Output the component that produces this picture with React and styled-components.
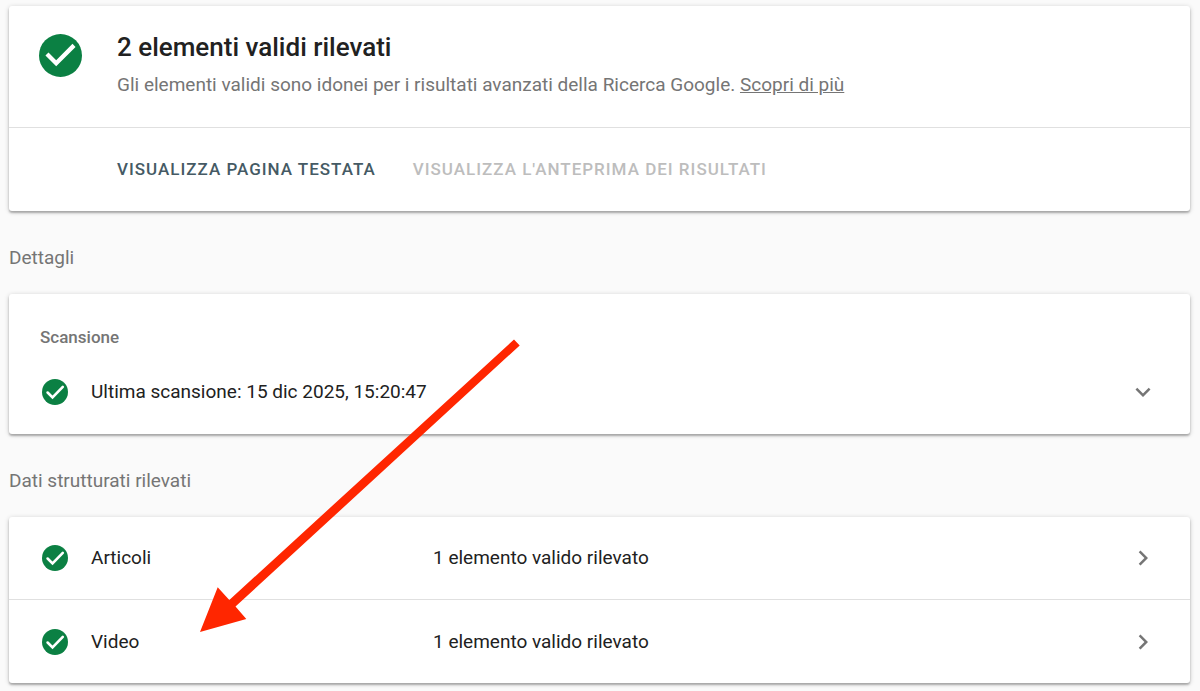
import React from "react";
import styled, {createGlobalStyle} from "styled-components";
import {MdChevronRight, MdExpandMore} from "react-icons/md";

const COLORS = {
  Background: '#fafafa',
  White: '#ffffff',
  Text: '#212121',
  Muted: '#757575',
  Action: '#455a64',
  Disabled: '#bdbdbd',
  Divider: '#e0e0e0',
  Green: '#0b8043',
  Red: '#ff2600',
};

const GlobalStyle = createGlobalStyle`
  body {
    margin: 0;
    background: ${COLORS.Background};
    color: ${COLORS.Text};
    font-family: Roboto, "Liberation Sans", sans-serif;
    font-size: 19px;
    line-height: 24px;
  }
`;

const Page = styled.main({
  position: 'relative',
  padding: '6px 10px 8px 9px',
});

const Card = styled.section({
  background: COLORS.White,
  borderRadius: '3px',
  boxShadow: '0 2px 2px rgba(0, 0, 0, 0.24), 0 1px 5px rgba(0, 0, 0, 0.2)',
});

const Summary = styled.div({
  display: 'flex',
  alignItems: 'flex-start',
  gap: '35px',
  padding: '28px 30px 30px',
  borderBottom: `1px solid ${COLORS.Divider}`,
});

const Title = styled.h1({
  margin: '0 0 13px',
  fontSize: '26px',
  lineHeight: '26px',
  fontWeight: 500,
});

const Description = styled.p({
  margin: 0,
  color: COLORS.Muted,
  a: {
    color: 'inherit',
  }
});

const Actions = styled.div({
  display: 'flex',
  alignItems: 'flex-start',
  gap: '37px',
  padding: '29px 30px 30px 108px',
});

const Action = styled.button({
  padding: 0,
  border: 0,
  background: 'none',
  fontFamily: 'inherit',
  fontSize: '17px',
  lineHeight: '24px',
  fontWeight: 500,
  letterSpacing: '1px',
  textTransform: 'uppercase',
  color: COLORS.Action,
  cursor: 'pointer',

  '&:disabled': {
    color: COLORS.Disabled,
    cursor: 'default',
  }
});

const SectionTitle = styled.h2({
  margin: 0,
  padding: '35px 0 24px',
  fontSize: '19px',
  lineHeight: '24px',
  fontWeight: 400,
  color: COLORS.Muted,
});

const CardTitle = styled.h3({
  margin: 0,
  padding: '31px 31px 1px',
  fontSize: '17px',
  lineHeight: '24px',
  fontWeight: 500,
  color: COLORS.Muted,
});

const Row = styled.button({
  display: 'grid',
  gridTemplateColumns: '26px 319px 1fr 30px',
  alignItems: 'center',
  columnGap: '23px',
  width: '100%',
  minHeight: '83px',
  boxSizing: 'border-box',
  padding: '0 32px 0 33px',
  border: 0,
  background: 'none',
  font: 'inherit',
  color: 'inherit',
  textAlign: 'left',
  cursor: 'pointer',

  '&:not(:last-child)': {
    borderBottom: `1px solid ${COLORS.Divider}`,
  },

  '> svg:last-child': {
    color: COLORS.Muted,
  }
});

const ScanRow = styled(Row)({
  gridTemplateColumns: '26px 1fr 30px',
  minHeight: '84px',
});

const Arrow = styled.svg({
  position: 'absolute',
  top: '339px',
  left: '200px',
  pointerEvents: 'none',
});

function CheckBadge({ size, rounded }) {
  return (
    <svg width={size} height={size} viewBox="0 0 20 20" aria-hidden="true">
      <circle cx="10" cy="10" r="10" fill={COLORS.Green} />
      {rounded ? (
        <path d="M4.3 10.4 8.1 14.1 16 6.1" fill="none" stroke={COLORS.White} strokeWidth="2" strokeLinecap="round" />
      ) : (
        <path d="M8 15l-5-5 1.41-1.41L8 12.17l7.59-7.59L17 6z" fill={COLORS.White} />
      )}
    </svg>
  )
}

const ITEMS = ['Articoli', 'Video'];

export default function App() {
  return (
    <Page>
      <GlobalStyle />

      <Card>
        <Summary>
          <CheckBadge size={43} />
          <div>
            <Title>2 elementi validi rilevati</Title>
            <Description>
              Gli elementi validi sono idonei per i risultati avanzati della Ricerca Google. <a href="#scopri">Scopri di più</a>
            </Description>
          </div>
        </Summary>
        <Actions>
          <Action type="button">Visualizza pagina testata</Action>
          <Action type="button" disabled>Visualizza l'anteprima dei risultati</Action>
        </Actions>
      </Card>

      <SectionTitle>Dettagli</SectionTitle>
      <Card>
        <CardTitle>Scansione</CardTitle>
        <ScanRow type="button" aria-expanded="false">
          <CheckBadge size={26} rounded />
          <span>Ultima scansione: 15 dic 2025, 15:20:47</span>
          <MdExpandMore size={30} />
        </ScanRow>
      </Card>

      <SectionTitle>Dati strutturati rilevati</SectionTitle>
      <Card>
        {ITEMS.map(name => (
          <Row key={name} type="button">
            <CheckBadge size={26} rounded />
            <span>{name}</span>
            <span>1 elemento valido rilevato</span>
            <MdChevronRight size={30} />
          </Row>
        ))}
      </Card>

      <Arrow width="320" height="293" viewBox="0 0 320 293" aria-hidden="true">
        <path d="M314 .6 319.7 6.4 35.5 267.6 46.3 280 0 293 17.7 248.3 29.3 261z" fill={COLORS.Red} />
      </Arrow>
    </Page>
  )
}
